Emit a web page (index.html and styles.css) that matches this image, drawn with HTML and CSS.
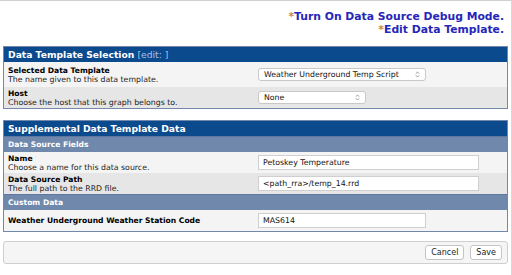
FILE: index.html
```html
<!DOCTYPE html>
<html>
<head>
<meta charset="utf-8">
<link rel="stylesheet" href="styles.css">
</head>
<body>
<div class="page">
  <div class="links">
    <div><span class="star">*</span><a href="#">Turn On Data Source Debug Mode.</a></div>
    <div><span class="star">*</span><a href="#">Edit Data Template.</a></div>
  </div>

  <div class="panel panel-first">
    <div class="head">Data Template Selection <span class="edit">[edit: ]</span></div>
    <div class="row light tall">
      <div class="label"><b>Selected Data Template</b><span>The name given to this data template.</span></div>
      <div class="field"><div class="select wide">Weather Underground Temp Script<svg class="arrows" viewBox="0 0 6 8"><path d="M1 3 L3 1 L5 3 M1 5 L3 7 L5 5" fill="none" stroke="#777" stroke-width="0.9"/></svg></div></div>
    </div>
    <div class="row dark">
      <div class="label"><b>Host</b><span>Choose the host that this graph belongs to.</span></div>
      <div class="field"><div class="select narrow">None<svg class="arrows" viewBox="0 0 6 8"><path d="M1 3 L3 1 L5 3 M1 5 L3 7 L5 5" fill="none" stroke="#777" stroke-width="0.9"/></svg></div></div>
    </div>
  </div>

  <div class="panel panel-second">
    <div class="head">Supplemental Data Template Data</div>
    <div class="sub">Data Source Fields</div>
    <div class="row light">
      <div class="label"><b>Name</b><span>Choose a name for this data source.</span></div>
      <div class="field"><div class="input long">Petoskey Temperature</div></div>
    </div>
    <div class="row dark">
      <div class="label"><b>Data Source Path</b><span>The full path to the RRD file.</span></div>
      <div class="field"><div class="input long">&lt;path_rra&gt;/temp_14.rrd</div></div>
    </div>
    <div class="sub">Custom Data</div>
    <div class="row light">
      <div class="label"><b>Weather Underground Weather Station Code</b></div>
      <div class="field"><div class="input short">MAS614</div></div>
    </div>
  </div>

  <div class="actions">
    <button class="btn">Cancel</button>
    <button class="btn">Save</button>
  </div>
</div>
</body>
</html>
```
FILE: styles.css
```css
html, body {
  margin: 0;
  padding: 0;
  background: #ffffff;
}
body {
  font-family: "DejaVu Sans", Verdana, sans-serif;
  color: #000;
  width: 512px;
  height: 275px;
  box-sizing: border-box;
  border-top: 1px solid #d0d0d0;
  border-right: 1px solid #d8d8d8;
  overflow: hidden;
}
.page {
  padding: 0 3px 0 3px;
}
.links {
  text-align: right;
  font-size: 10.8px;
  font-weight: bold;
  line-height: 13px;
  padding: 9px 4px 0 0;
  height: 36px;
}
.links a {
  color: #2626b8;
  text-decoration: none;
}
.star {
  color: #c8894a;
}
.panel {
  border: 1px solid #7389ab;
  background: #f3f3f3;
}
.panel-second {
  margin-top: 11px;
}
.head {
  background: #0c4a8e;
  color: #fff;
  font-weight: bold;
  font-size: 9.2px;
  height: 15px;
  line-height: 15px;
  padding-left: 4px;
}
.edit {
  font-weight: normal;
  color: #a9c3ea;
}
.sub {
  background: #6f88ab;
  color: #fff;
  font-weight: bold;
  font-size: 7.6px;
  height: 15px;
  line-height: 15px;
  padding-left: 4px;
  border-top: 1px solid #5d77a0;
}
.row {
  display: flex;
  align-items: center;
  min-height: 21px;
}
.row.tall {
  min-height: 25px;
}
.row.light {
  background: #f4f4f4;
}
.row.dark {
  background: #e6e6e6;
}
.label {
  width: 250px;
  padding-left: 4px;
  display: flex;
  flex-direction: column;
  font-size: 7.6px;
  line-height: 9px;
}
.label b {
  font-weight: bold;
}
.label span {
  color: #222;
  font-size: 7.8px;
}
.field {
  flex: 1;
  font-size: 7.8px;
}
.select {
  position: relative;
  box-sizing: border-box;
  height: 13px;
  line-height: 11px;
  border: 1px solid #c8c8c8;
  border-radius: 3px;
  background: #fff;
  padding-left: 5px;
  color: #111;
}
.select.wide { width: 168px; }
.select.narrow { width: 108px; }
.arrows {
  position: absolute;
  right: 5px;
  top: 2px;
  width: 5px;
  height: 7px;
}
.input {
  box-sizing: border-box;
  height: 15px;
  line-height: 13px;
  border: 1px solid #cfcfcf;
  background: #fff;
  padding-left: 4px;
  color: #111;
}
.input.long { width: 221px; }
.input.short { width: 168px; }
.actions {
  margin-top: 9px;
  height: 21px;
  border: 1px solid #cfcfcf;
  border-radius: 3px;
  background: #f5f5f5;
  display: flex;
  justify-content: flex-end;
  align-items: center;
  gap: 6px;
  padding-right: 5px;
}
.btn {
  font-family: "DejaVu Sans", Verdana, sans-serif;
  font-size: 8px;
  height: 15px;
  padding: 0 5px;
  border: 1px solid #c4c4c4;
  border-radius: 3px;
  background: #fff;
  color: #222;
}
```
